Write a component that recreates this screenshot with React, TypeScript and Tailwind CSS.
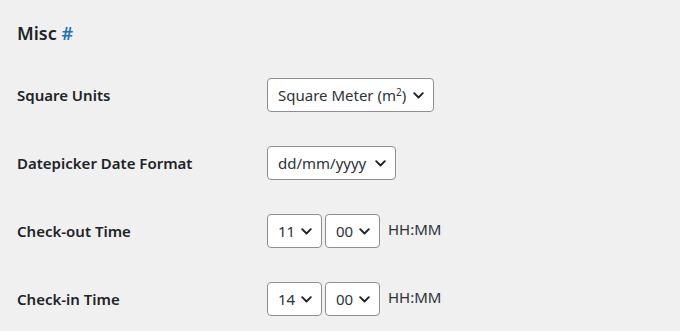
import React from 'react'

const Chevron = () => (
  <svg width="11" height="7" viewBox="0 0 11 7" className="shrink-0">
    <path d="M1.2 1.2 L5.5 5.5 L9.8 1.2" fill="none" stroke="#1d2327" strokeWidth="1.9" strokeLinecap="round" strokeLinejoin="round" />
  </svg>
);

const FakeSelect = ({ children, width }: { children: React.ReactNode; width: string }) => (
  <div className={`flex h-[34px] items-center justify-between rounded-[4px] border border-[#8c8f94] bg-white pl-[10px] pr-[9px] text-[15px] text-[#2c3338] ${width}`}>
    <span className="leading-none">{children}</span>
    <Chevron />
  </div>
);

const Row = ({ label, children }: { label: string; children: React.ReactNode }) => (
  <div className="flex h-[68px] items-center">
    <div className="w-[250px] text-[15px] font-semibold text-[#1d2327]">{label}</div>
    <div className="flex items-center gap-[3px]">{children}</div>
  </div>
);

const App = () => {
  return (
    <div className="h-[331px] w-[680px] overflow-hidden bg-[#f0f0f1] pl-[17px] font-['Noto_Sans',sans-serif]">
      <h2 className="h-[61px] pt-[20px] text-[18px] font-semibold leading-[26px] text-[#1d2327]">
        Misc <a className="text-[#2271b1]">#</a>
      </h2>
      <Row label="Square Units">
        <FakeSelect width="w-[167px]">
          Square Meter (m<sup className="text-[10px]">2</sup>)
        </FakeSelect>
      </Row>
      <Row label="Datepicker Date Format">
        <FakeSelect width="w-[129px]">dd/mm/yyyy</FakeSelect>
      </Row>
      <Row label="Check-out Time">
        <FakeSelect width="w-[55px]">11</FakeSelect>
        <FakeSelect width="w-[55px]">00</FakeSelect>
        <span className="ml-[5px] -mt-[3px] text-[15px] text-[#2c3338]">HH:MM</span>
      </Row>
      <Row label="Check-in Time">
        <FakeSelect width="w-[55px]">14</FakeSelect>
        <FakeSelect width="w-[55px]">00</FakeSelect>
        <span className="ml-[5px] -mt-[3px] text-[15px] text-[#2c3338]">HH:MM</span>
      </Row>
    </div>
  )
}

export default App;
